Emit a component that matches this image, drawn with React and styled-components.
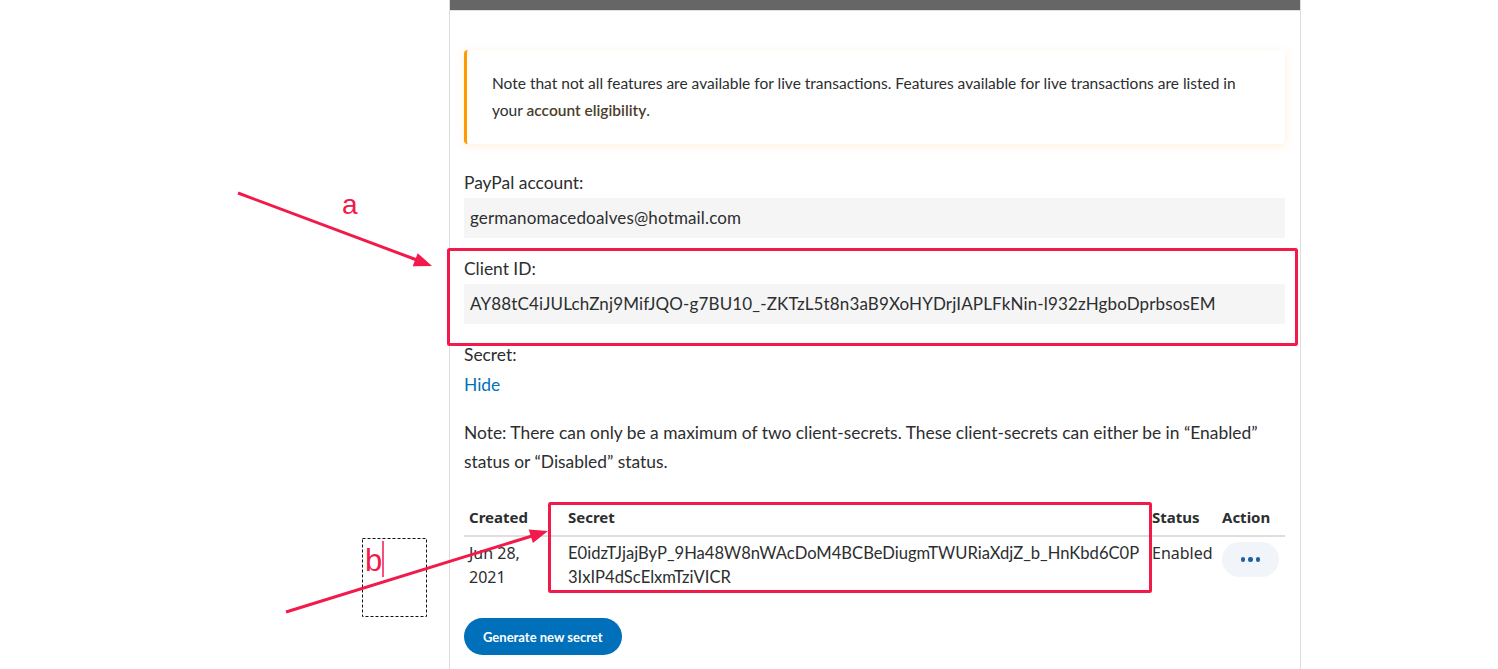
import React from 'react';
import styled, { createGlobalStyle } from 'styled-components';

const GlobalStyle = createGlobalStyle`
  body {
    margin: 0;
    background: #fff;
    color: #2c2e2f;
    font-family: Lato, "Open Sans", sans-serif;
  }
`;

const secret = 'E0idzTJjajByP_9Ha48W8nWAcDoM4BCBeDiugmTWURiaXdjZ_b_HnKbd6C0P3IxIP4dScElxmTziVICR';

class App extends React.Component {
    render() {
        return (
            <Page>
                <GlobalStyle />
                <Panel>
                    <TopBar />
                    <Content>
                        <Notice>
                            Note that not all features are available for live transactions. Features available for live transactions are listed in your <NoticeLink>account eligibility</NoticeLink>.
                        </Notice>
                        <Fields>
                            <Field>
                                <Label>PayPal account:</Label>
                                <Value>germanomacedoalves@hotmail.com</Value>
                            </Field>
                            <Field>
                                <Label>Client ID:</Label>
                                <Value>AY88tC4iJULchZnj9MifJQO-g7BU10_-ZKTzL5t8n3aB9XoHYDrjIAPLFkNin-l932zHgboDprbsosEM</Value>
                            </Field>
                            <Field gap="6px">
                                <Label>Secret:</Label>
                                <TextLink>Hide</TextLink>
                            </Field>
                        </Fields>
                        <Paragraph>
                            Note: There can only be a maximum of two client-secrets. These client-secrets can either be in “Enabled” status or “Disabled” status.
                        </Paragraph>
                        <Table>
                            <HeadCell>Created</HeadCell>
                            <HeadCell>Secret</HeadCell>
                            <HeadCell tight>Status</HeadCell>
                            <HeadCell>Action</HeadCell>
                            <Cell>Jun 28, 2021</Cell>
                            <Cell secret>{secret}</Cell>
                            <Cell tight>Enabled</Cell>
                            <Cell>
                                <MoreButton type="button" aria-label="More actions">
                                    <Dot /><Dot /><Dot />
                                </MoreButton>
                            </Cell>
                        </Table>
                        <PrimaryButton type="button">Generate new secret</PrimaryButton>
                    </Content>
                </Panel>
                <Annotations viewBox="0 0 1498 669" width="1498" height="669">
                    <line x1="238" y1="193" x2="417" y2="260" stroke="#f2194b" strokeWidth="3" />
                    <polygon points="432,266 412.7,266.3 417.7,253.2" fill="#f2194b" />
                    <text x="342" y="214" fill="#f2194b" fontFamily="Liberation Sans, Arial, sans-serif" fontSize="28">a</text>
                    <rect x="448.5" y="249.5" width="848" height="95" fill="none" stroke="#f2194b" strokeWidth="3" rx="1" />
                    <rect x="549.5" y="503.5" width="601" height="88" fill="none" stroke="#f2194b" strokeWidth="3" rx="1" />
                    <rect x="362.5" y="538.5" width="64" height="78" fill="none" stroke="#111" strokeWidth="1" strokeDasharray="3 2" />
                    <text x="365" y="571" fill="#f2194b" fontFamily="Liberation Sans, Arial, sans-serif" fontSize="31">b</text>
                    <line x1="383" y1="541" x2="383" y2="577" stroke="#f2194b" strokeWidth="1.5" />
                    <line x1="286" y1="612" x2="532" y2="536" stroke="#f2194b" strokeWidth="3" />
                    <polygon points="548,531 532.9,543 528.7,529.6" fill="#f2194b" />
                </Annotations>
            </Page>
        );
    }
}

export default App;

const Page = styled.div`
    position: relative;
    display: flex;
    padding-left: 449px;
    height: 669px;
    overflow: hidden;
`;

const Panel = styled.section`
    width: 852px;
    box-sizing: border-box;
    border-left: 1px solid #dcdcdc;
    border-right: 1px solid #dcdcdc;
    display: flex;
    flex-direction: column;
`;

const TopBar = styled.div`
    height: 10px;
    background: #666;
    border-bottom: 1px solid #e2e2e2;
`;

const Content = styled.div`
    padding: 39px 15px 0 14px;
    display: flex;
    flex-direction: column;
    align-items: flex-start;
`;

const Notice = styled.div`
    align-self: stretch;
    border-left: 3px solid #ff9a00;
    border-radius: 4px;
    box-shadow: 0 2px 10px rgba(255, 150, 40, 0.16);
    padding: 20px 24px 20px 25px;
    font-size: 15.5px;
    line-height: 27px;
`;

const NoticeLink = styled.span`
    color: #4b3d2c;
    font-weight: 600;
`;

const Fields = styled.div`
    align-self: stretch;
    margin-top: 27px;
    display: flex;
    flex-direction: column;
    gap: 19px;
`;

const Field = styled.div`
    display: flex;
    flex-direction: column;
    align-items: flex-start;
    gap: ${(p) => p.gap || '3px'};
`;

const Label = styled.div`
    font-size: 17.4px;
    line-height: 24px;
`;

const Value = styled.div`
    align-self: stretch;
    height: 40px;
    display: flex;
    align-items: center;
    padding: 0 6px 2px;
    box-sizing: border-box;
    background: #f5f5f5;
    font-size: 17px;
    letter-spacing: 0.15px;
`;

const TextLink = styled.a`
    color: #0070ba;
    font-size: 17.4px;
    line-height: 24px;
    cursor: pointer;
`;

const Paragraph = styled.p`
    margin: 21px 0 0;
    font-size: 17.4px;
    line-height: 29px;
`;

const Table = styled.div`
    align-self: stretch;
    margin-top: 23px;
    display: grid;
    grid-template-columns: 99px 584px 70px 68px;
`;

const HeadCell = styled.div`
    padding: ${(p) => (p.tight ? '6px 0 6px 5px' : '6px 5px')};
    font-family: "Noto Sans", "Open Sans", sans-serif;
    font-weight: 700;
    font-size: 15px;
    line-height: 24px;
    border-bottom: 2px solid #dedede;
`;

const Cell = styled.div`
    padding: ${(p) => (p.tight ? '4px 0 6px 5px' : '4px 5px 6px')};
    font-family: ${(p) => (p.secret ? 'Lato, sans-serif' : '"Noto Sans", "Open Sans", sans-serif')};
    font-size: ${(p) => (p.secret ? '16.6px' : '16px')};
    line-height: 24px;
    word-break: ${(p) => (p.secret ? 'break-all' : 'normal')};
`;

const MoreButton = styled.button`
    width: 57px;
    height: 35px;
    margin-top: 1px;
    border: none;
    border-radius: 18px;
    background: #f1f4f8;
    display: flex;
    align-items: center;
    justify-content: center;
    gap: 3px;
    padding: 0;
`;

const Dot = styled.span`
    width: 4.5px;
    height: 4.5px;
    border-radius: 50%;
    background: #1f5fa8;
`;

const PrimaryButton = styled.button`
    margin-top: 23px;
    height: 37px;
    padding: 0 19px;
    border: none;
    border-radius: 19px;
    background: #0070ba;
    color: #fff;
    font-family: Lato, sans-serif;
    font-weight: 700;
    font-size: 13px;
`;

const Annotations = styled.svg`
    position: absolute;
    left: 0;
    top: 0;
    pointer-events: none;
`;
